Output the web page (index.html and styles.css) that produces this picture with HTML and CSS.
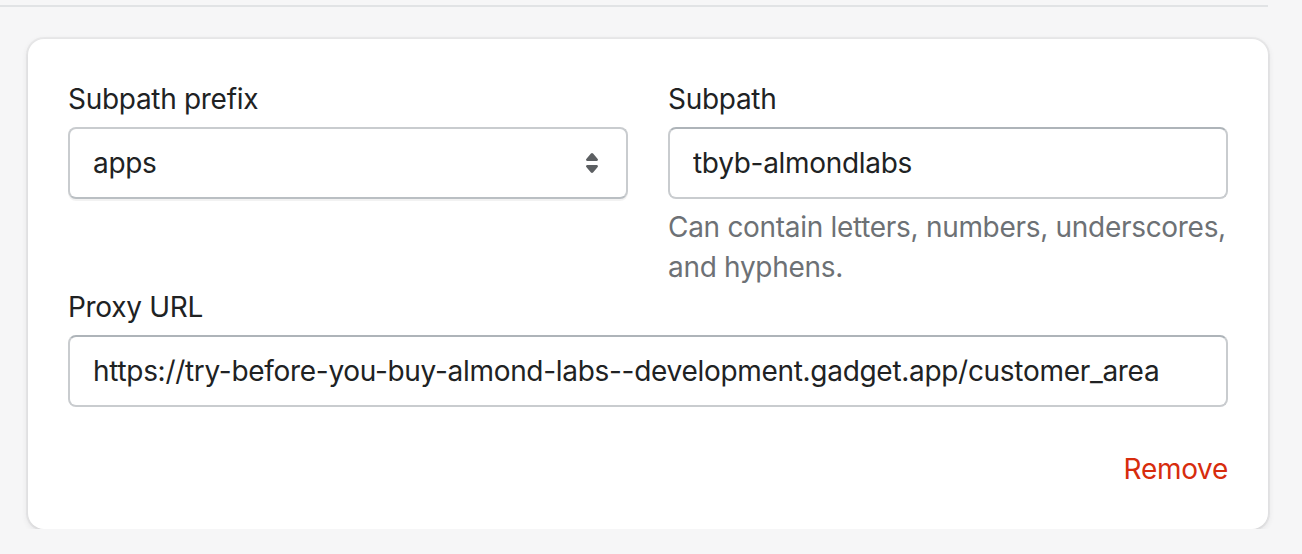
FILE: index.html
```html
<!DOCTYPE html>
<html lang="en">
<head>
<meta charset="utf-8">
<title>Proxy settings</title>
<link rel="stylesheet" href="styles.css">
</head>
<body>
<div class="page">
  <div class="divider"></div>
  <div class="card">
    <div class="group">
      <div class="field">
        <label class="label" for="prefix">Subpath prefix</label>
        <div class="select-wrap">
          <select id="prefix" class="control select">
            <option>apps</option>
          </select>
          <svg class="select-icon" viewBox="0 0 20 20" aria-hidden="true"><path d="M7.676 9h4.648c.563 0 .879-.603.53-1.014l-2.323-2.746a.708.708 0 0 0-1.062 0l-2.324 2.746c-.347.411-.032 1.014.531 1.014Zm4.648 2h-4.648c-.563 0-.878.603-.53 1.014l2.323 2.746c.27.32.792.32 1.062 0l2.323-2.746c.349-.411.033-1.014-.53-1.014Z"/></svg>
        </div>
      </div>
      <div class="field">
        <label class="label" for="subpath">Subpath</label>
        <input id="subpath" class="control" type="text" value="tbyb-almondlabs">
        <p class="help">Can contain letters, numbers, underscores,<br>and hyphens.</p>
      </div>
    </div>
    <div class="field">
      <label class="label" for="proxy">Proxy URL</label>
      <input id="proxy" class="control" type="text" value="https://try-before-you-buy-almond-labs--development.gadget.app/customer_area">
    </div>
    <div class="actions">
      <button class="remove" type="button">Remove</button>
    </div>
  </div>
</div>
</body>
</html>
```

FILE: styles.css
```css
* { box-sizing: border-box; }

body {
  margin: 0;
  background: #f6f6f7;
  font-family: Inter, "Noto Sans", sans-serif;
  letter-spacing: -0.3px;
  color: #202223;
}

.page {
  width: 1268px;
  padding-top: 5px;
}

.divider {
  height: 2px;
  background: #e1e3e5;
}

.card {
  margin: 32px 0 0 28px;
  background: #fff;
  border-radius: 16px;
  box-shadow: 0 0 0 2px rgba(63, 63, 68, 0.05), 0 2px 6px rgba(63, 63, 68, 0.15);
  padding: 40px;
  display: flex;
  flex-direction: column;
}

.group {
  display: grid;
  grid-template-columns: 1fr 1fr;
  column-gap: 40px;
}

.field {
  display: flex;
  flex-direction: column;
  min-width: 0;
}

.label {
  display: block;
  font-size: 28px;
  line-height: 40px;
  margin-bottom: 8px;
}

.control {
  width: 100%;
  height: 72px;
  margin: 0;
  border: 2px solid #c9cccf;
  border-top-color: #aeb4b9;
  border-radius: 8px;
  padding: 0 23px;
  font-family: inherit;
  font-size: 28px;
  letter-spacing: -0.3px;
  color: #202223;
  background: #fff;
  outline: none;
}

.select-wrap {
  position: relative;
}

.select {
  appearance: none;
  -webkit-appearance: none;
  border-color: #c9cccf;
  border-bottom-color: #babfc3;
  box-shadow: 0 2px 0 rgba(0, 0, 0, 0.05);
}

.select-icon {
  position: absolute;
  right: 16px;
  top: 16px;
  width: 40px;
  height: 40px;
  fill: #5c5f62;
  pointer-events: none;
}

.help {
  margin: 8px 0 0;
  font-size: 28px;
  line-height: 40px;
  color: #6d7175;
  white-space: nowrap;
}

.actions {
  display: flex;
  justify-content: flex-end;
  margin-top: 42px;
}

.remove {
  border: 0;
  background: none;
  padding: 0;
  font-family: inherit;
  font-size: 28px;
  line-height: 40px;
  letter-spacing: -0.3px;
  color: #d72c0d;
  cursor: pointer;
}
```
